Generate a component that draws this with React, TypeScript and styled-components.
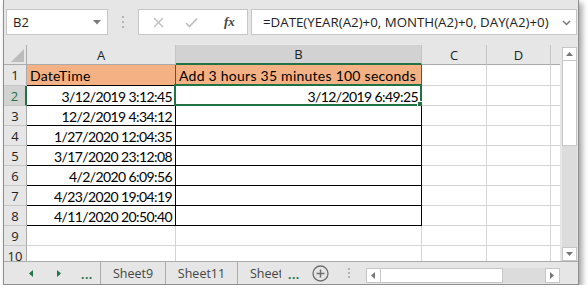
import styled, { createGlobalStyle } from "styled-components";

const GlobalStyle = createGlobalStyle`
  body {
    margin: 0;
    background: #ffffff;
  }
`;

const GREEN = "#217346";
const GRID = "#d4d4d4";

const Window = styled.div`
  margin-left: 3px;
  width: 576px;
  height: 285px;
  box-sizing: border-box;
  background: #e6e6e6;
  border: 1px solid #8f8f8f;
  border-top: none;
  box-shadow: 3px 3px 6px rgba(0, 0, 0, 0.38);
  display: flex;
  flex-direction: column;
  overflow: hidden;
  font-family: "Open Sans", "Noto Sans", sans-serif;
`;

const FormulaBar = styled.div`
  height: 45px;
  box-sizing: border-box;
  padding: 9px 1px 0 2px;
  display: flex;
  align-items: flex-start;
`;

const Field = styled.div<{ $w?: number }>`
  height: 26px;
  box-sizing: border-box;
  background: #ffffff;
  border: 1px solid #c6c6c6;
  display: flex;
  align-items: center;
  position: relative;
  flex: ${(p) => (p.$w ? `0 0 ${p.$w}px` : "1 1 auto")};
`;

const NameText = styled.span`
  margin-left: 6px;
  font-size: 13px;
  color: #222;
`;

const Caret = styled.svg`
  position: absolute;
  right: 6px;
  top: 10px;
`;

const Grip = styled.div`
  flex: 0 0 30px;
  height: 26px;
  display: flex;
  flex-direction: column;
  align-items: center;
  justify-content: center;
  gap: 3px;

  span {
    width: 2px;
    height: 2px;
    background: #b4b4b4;
  }
`;

const FxIcons = styled.div`
  display: flex;
  align-items: center;
  width: 100%;
  padding-left: 14px;
  gap: 21px;
`;

const Fx = styled.span`
  margin-left: 5px;
  font-family: "Liberation Serif", serif;
  font-style: italic;
  font-weight: bold;
  font-size: 13px;
  color: #444;
`;

const FormulaText = styled.span`
  margin-left: 11px;
  font-size: 13.3px;
  color: #222;
  white-space: nowrap;
`;

const SheetArea = styled.div`
  height: 217px;
  box-sizing: border-box;
  border-bottom: 1px solid #ababab;
  display: flex;
`;

const Grid = styled.div`
  display: grid;
  grid-template-columns: 23px 149px 246px 65px 64px 10px;
  grid-template-rows: 20px 21px repeat(9, 20px);
  height: 216px;
  overflow: hidden;
  background: #ffffff;
`;

const Corner = styled.div`
  background: #e6e6e6;
  border-right: 1px solid #ababab;
  border-bottom: 1px solid #ababab;
  box-sizing: border-box;
  position: relative;

  svg {
    position: absolute;
    right: 2px;
    bottom: 2px;
  }
`;

const ColHead = styled.div<{ $active?: boolean; $edge?: boolean }>`
  box-sizing: border-box;
  background: ${(p) => (p.$active ? "#d2d2d2" : "#e6e6e6")};
  border-right: 1px solid ${(p) => (p.$edge ? "#ababab" : "#c6c6c6")};
  border-bottom: ${(p) => (p.$active ? `2px solid ${GREEN}` : "1px solid #ababab")};
  display: flex;
  align-items: center;
  justify-content: center;
  font-size: 13px;
  color: #222;
`;

const RowHead = styled.div<{ $active?: boolean }>`
  box-sizing: border-box;
  background: ${(p) => (p.$active ? "#d2d2d2" : "#e6e6e6")};
  border-right: ${(p) => (p.$active ? `2px solid ${GREEN}` : "1px solid #ababab")};
  border-bottom: 1px solid #c6c6c6;
  display: flex;
  align-items: center;
  justify-content: center;
  font-size: 13px;
  color: ${(p) => (p.$active ? GREEN : "#222")};
`;

const Cell = styled.div<{ $right: string; $bottom: string; $head?: boolean }>`
  box-sizing: border-box;
  position: relative;
  background: ${(p) => (p.$head ? "#f4b183" : "#ffffff")};
  border-right: 1px solid ${(p) => p.$right};
  border-bottom: 1px solid ${(p) => p.$bottom};
  display: flex;
  align-items: center;
  justify-content: ${(p) => (p.$head ? "flex-start" : "flex-end")};
  padding: 1px 3px 0 3px;
  font-family: "Lato", "Liberation Sans", sans-serif;
  font-size: 14px;
  letter-spacing: ${(p) => (p.$head ? "0.25px" : "-0.6px")};
  color: #000;
  white-space: nowrap;
`;

const Selection = styled.div`
  position: absolute;
  left: -2px;
  top: -2px;
  right: -1px;
  bottom: -1px;
  border: 2px solid ${GREEN};
  pointer-events: none;

  &::after {
    content: "";
    position: absolute;
    right: -4px;
    bottom: -4px;
    width: 5px;
    height: 5px;
    background: ${GREEN};
    border: 1px solid #ffffff;
  }
`;

const VScroll = styled.div`
  flex: 1 1 auto;
  display: flex;
  flex-direction: column;
  padding: 2px 1px 0 2px;
  height: 216px;
  box-sizing: border-box;
`;

const ArrowBox = styled.div<{ $w?: number; $h?: number }>`
  flex: 0 0 auto;
  width: ${(p) => (p.$w ? `${p.$w}px` : "auto")};
  height: ${(p) => (p.$h ? `${p.$h}px` : "auto")};
  box-sizing: border-box;
  background: #ffffff;
  border: 1px solid #c6c6c6;
  display: flex;
  align-items: center;
  justify-content: center;
`;

const Thumb = styled.div<{ $size: number; $vertical?: boolean }>`
  flex: 0 0 ${(p) => p.$size}px;
  box-sizing: border-box;
  background: #ffffff;
  border: 1px solid #c6c6c6;
  ${(p) => (p.$vertical ? "border-top: none;" : "border-left: none;")}
`;

const Track = styled.div`
  flex: 1 1 auto;
  background: #dcdcdc;
`;

const TabBar = styled.div`
  flex: 1 1 auto;
  display: flex;
  align-items: stretch;
`;

const Nav = styled.div`
  flex: 0 0 97px;
  box-sizing: border-box;
  border-right: 1px solid #ababab;
  display: flex;
  align-items: center;
  padding-left: 25px;
`;

const NavArrow = styled.svg<{ $gap: number }>`
  margin-right: ${(p) => p.$gap}px;
`;

const GreenDots = styled.span`
  color: ${GREEN};
  font-weight: bold;
  font-size: 12px;
  letter-spacing: 0.5px;
  line-height: 1;
  padding-top: 4px;
`;

const Tab = styled.div<{ $w: number }>`
  flex: 0 0 ${(p) => p.$w}px;
  box-sizing: border-box;
  border-right: 1px solid #ababab;
  display: flex;
  align-items: center;
  justify-content: center;
  font-size: 12.5px;
  color: #444;
`;

const ClippedTab = styled.div`
  flex: 0 0 43px;
  overflow: hidden;
  display: flex;
  align-items: center;
  padding-left: 12px;
  box-sizing: border-box;
  font-size: 12.5px;
  color: #444;
  white-space: nowrap;
`;

const MoreTabs = styled(GreenDots)`
  flex: 0 0 17px;
  align-self: center;
  padding-left: 7px;
  box-sizing: border-box;
`;

const AddSheet = styled.div`
  flex: 0 0 42px;
  display: flex;
  align-items: center;
  justify-content: center;
`;

const BarGrip = styled(Grip)`
  flex: 0 0 14px;
  height: auto;
  gap: 2px;
`;

const HScroll = styled.div`
  flex: 0 0 194px;
  display: flex;
  margin-left: 10px;
  padding: 6px 0 1px 0;
`;

const data: [string, string][] = [
  ["DateTime", "Add 3 hours 35 minutes 100 seconds"],
  ["3/12/2019 3:12:45", "3/12/2019 6:49:25"],
  ["12/2/2019 4:34:12", ""],
  ["1/27/2020 12:04:35", ""],
  ["3/17/2020 23:12:08", ""],
  ["4/2/2020 6:09:56", ""],
  ["4/23/2020 19:04:19", ""],
  ["4/11/2020 20:50:40", ""],
  ["", ""],
  ["", ""],
];

const TriUp = () => (
  <svg width="7" height="4" viewBox="0 0 7 4">
    <path d="M0 4 L3.5 0 L7 4 Z" fill="#777" />
  </svg>
);

const TriDown = () => (
  <svg width="7" height="4" viewBox="0 0 7 4">
    <path d="M0 0 L3.5 4 L7 0 Z" fill="#777" />
  </svg>
);

const TriLeft = () => (
  <svg width="4" height="7" viewBox="0 0 4 7">
    <path d="M4 0 L0 3.5 L4 7 Z" fill="#777" />
  </svg>
);

const TriRight = () => (
  <svg width="4" height="7" viewBox="0 0 4 7">
    <path d="M0 0 L4 3.5 L0 7 Z" fill="#777" />
  </svg>
);

export default function App() {
  return (
    <>
      <GlobalStyle />
      <Window>
        <FormulaBar>
          <Field $w={102}>
            <NameText>B2</NameText>
            <Caret width="8" height="5" viewBox="0 0 8 5">
              <path d="M0 0 L4 4.5 L8 0 Z" fill="#7a7a7a" />
            </Caret>
          </Field>
          <Grip>
            <span />
            <span />
            <span />
          </Grip>
          <Field $w={110}>
            <FxIcons>
              <svg width="11" height="11" viewBox="0 0 11 11">
                <path d="M1 1 L10 10 M10 1 L1 10" stroke="#bdbdbd" strokeWidth="1.4" />
              </svg>
              <svg width="13" height="11" viewBox="0 0 13 11">
                <path d="M1 6 L4.5 9.5 L12 1.5" stroke="#bdbdbd" strokeWidth="1.6" fill="none" />
              </svg>
              <Fx>fx</Fx>
            </FxIcons>
          </Field>
          <Field style={{ marginLeft: 3 }}>
            <FormulaText>=DATE(YEAR(A2)+0, MONTH(A2)+0, DAY(A2)+0)</FormulaText>
            <Caret width="9" height="6" viewBox="0 0 9 6" style={{ right: 5, top: 10 }}>
              <path d="M1 1 L4.5 4.5 L8 1" stroke="#7a7a7a" strokeWidth="1.5" fill="none" />
            </Caret>
          </Field>
        </FormulaBar>

        <SheetArea>
          <Grid>
            <Corner>
              <svg width="13" height="13" viewBox="0 0 13 13">
                <path d="M13 0 L13 13 L0 13 Z" fill="#bcbcbc" />
              </svg>
            </Corner>
            <ColHead>A</ColHead>
            <ColHead $active>B</ColHead>
            <ColHead>C</ColHead>
            <ColHead>D</ColHead>
            <ColHead $edge />
            {data.map(([a, b], i) => {
              const row = i + 1;
              const boxed = row <= 8;
              const line = boxed ? "#000" : GRID;
              const head = row === 1;
              return [
                <RowHead key={`h${row}`} $active={row === 2}>
                  {row}
                </RowHead>,
                <Cell key={`a${row}`} $right={head ? GREEN : line} $bottom={line} $head={head}>
                  {a}
                </Cell>,
                <Cell key={`b${row}`} $right={head ? GREEN : line} $bottom={line} $head={head}>
                  {b}
                  {row === 2 && <Selection />}
                </Cell>,
                <Cell key={`c${row}`} $right={GRID} $bottom={GRID} />,
                <Cell key={`d${row}`} $right={GRID} $bottom={GRID} />,
                <Cell key={`e${row}`} $right="#ababab" $bottom={GRID} />,
              ];
            })}
          </Grid>
          <VScroll>
            <ArrowBox $w={15} $h={14}>
              <TriUp />
            </ArrowBox>
            <Thumb $vertical $size={85} />
            <Track />
            <ArrowBox $w={15} $h={14}>
              <TriDown />
            </ArrowBox>
          </VScroll>
        </SheetArea>

        <TabBar>
          <Nav>
            <NavArrow $gap={24} width="4" height="7" viewBox="0 0 4 7">
              <path d="M4 0 L0 3.5 L4 7 Z" fill={GREEN} />
            </NavArrow>
            <NavArrow $gap={20} width="4" height="7" viewBox="0 0 4 7">
              <path d="M0 0 L4 3.5 L0 7 Z" fill={GREEN} />
            </NavArrow>
            <GreenDots>...</GreenDots>
          </Nav>
          <Tab $w={65}>Sheet9</Tab>
          <Tab $w={72}>Sheet11</Tab>
          <ClippedTab>Sheet12</ClippedTab>
          <MoreTabs>...</MoreTabs>
          <AddSheet>
            <svg width="17" height="17" viewBox="0 0 17 17">
              <circle cx="8.5" cy="8.5" r="7.5" stroke="#6f6f6f" strokeWidth="1.3" fill="none" />
              <path d="M8.5 4.5 V12.5 M4.5 8.5 H12.5" stroke="#6f6f6f" strokeWidth="1.5" />
            </svg>
          </AddSheet>
          <BarGrip>
            <span />
            <span />
            <span />
          </BarGrip>
          <HScroll>
            <ArrowBox $w={15}>
              <TriLeft />
            </ArrowBox>
            <Thumb $size={122} />
            <Track />
            <ArrowBox $w={15}>
              <TriRight />
            </ArrowBox>
          </HScroll>
        </TabBar>
      </Window>
    </>
  );
}
